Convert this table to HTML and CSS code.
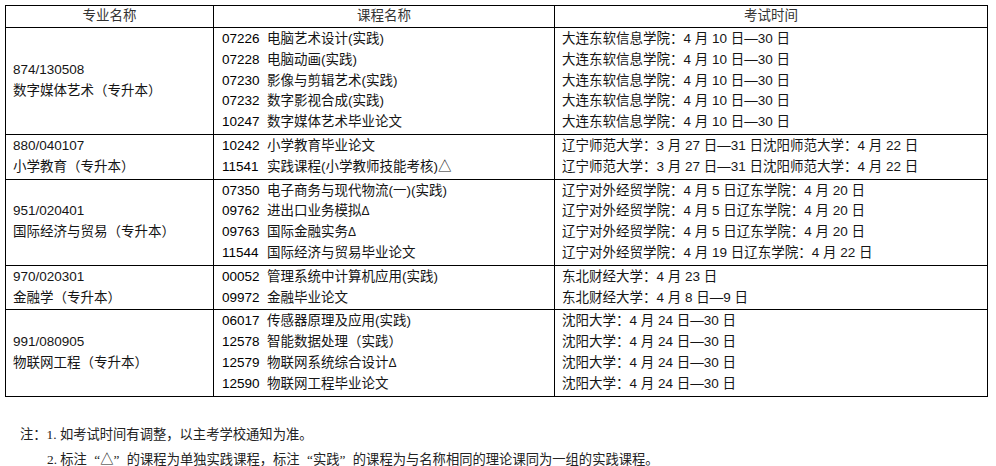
FILE: index.html
```html
<!DOCTYPE html>
<html lang="zh-CN">
<head>
<meta charset="utf-8">
<link rel="stylesheet" href="styles.css">
</head>
<body>
<div class="page">
<table class="sched">
<colgroup><col class="c1"><col class="c2"><col class="c3"></colgroup>
<thead>
<tr><th>专业名称</th><th>课程名称</th><th>考试时间</th></tr>
</thead>
<tbody>
<tr>
<td class="major"><div>874/130508</div><div>数字媒体艺术（专升本）</div></td>
<td class="course">
<div><span class="code">07226</span>电脑艺术设计(实践)</div>
<div><span class="code">07228</span>电脑动画(实践)</div>
<div><span class="code">07230</span>影像与剪辑艺术(实践)</div>
<div><span class="code">07232</span>数字影视合成(实践)</div>
<div><span class="code">10247</span>数字媒体艺术毕业论文</div>
</td>
<td class="time">
<div>大连东软信息学院：4 月 10 日—30 日</div>
<div>大连东软信息学院：4 月 10 日—30 日</div>
<div>大连东软信息学院：4 月 10 日—30 日</div>
<div>大连东软信息学院：4 月 10 日—30 日</div>
<div>大连东软信息学院：4 月 10 日—30 日</div>
</td>
</tr>
<tr>
<td class="major"><div>880/040107</div><div>小学教育（专升本）</div></td>
<td class="course">
<div><span class="code">10242</span>小学教育毕业论文</div>
<div><span class="code">11541</span>实践课程(小学教师技能考核)△</div>
</td>
<td class="time">
<div>辽宁师范大学：3 月 27 日—31 日沈阳师范大学：4 月 22 日</div>
<div>辽宁师范大学：3 月 27 日—31 日沈阳师范大学：4 月 22 日</div>
</td>
</tr>
<tr>
<td class="major"><div>951/020401</div><div>国际经济与贸易（专升本）</div></td>
<td class="course">
<div><span class="code">07350</span>电子商务与现代物流(一)(实践)</div>
<div><span class="code">09762</span>进出口业务模拟<span class="delta">Δ</span></div>
<div><span class="code">09763</span>国际金融实务<span class="delta">Δ</span></div>
<div><span class="code">11544</span>国际经济与贸易毕业论文</div>
</td>
<td class="time">
<div>辽宁对外经贸学院：4 月 5 日辽东学院：4 月 20 日</div>
<div>辽宁对外经贸学院：4 月 5 日辽东学院：4 月 20 日</div>
<div>辽宁对外经贸学院：4 月 5 日辽东学院：4 月 20 日</div>
<div>辽宁对外经贸学院：4 月 19 日辽东学院：4 月 22 日</div>
</td>
</tr>
<tr>
<td class="major"><div>970/020301</div><div>金融学（专升本）</div></td>
<td class="course">
<div><span class="code">00052</span>管理系统中计算机应用(实践)</div>
<div><span class="code">09972</span>金融毕业论文</div>
</td>
<td class="time">
<div>东北财经大学：4 月 23 日</div>
<div>东北财经大学：4 月 8 日—9 日</div>
</td>
</tr>
<tr>
<td class="major"><div>991/080905</div><div>物联网工程（专升本）</div></td>
<td class="course">
<div><span class="code">06017</span>传感器原理及应用(实践)</div>
<div><span class="code">12578</span>智能数据处理（实践）</div>
<div><span class="code">12579</span>物联网系统综合设计<span class="delta">Δ</span></div>
<div><span class="code">12590</span>物联网工程毕业论文</div>
</td>
<td class="time">
<div>沈阳大学：4 月 24 日—30 日</div>
<div>沈阳大学：4 月 24 日—30 日</div>
<div>沈阳大学：4 月 24 日—30 日</div>
<div>沈阳大学：4 月 24 日—30 日</div>
</td>
</tr>
</tbody>
</table>
<div class="notes">
<p class="note first">注：1. 如考试时间有调整，以主考学校通知为准。</p>
<p class="note second">2. 标注<span class="qo">“</span><span class="cjk">△</span><span class="qc">”</span>的课程为单独实践课程，标注<span class="qo">“</span>实践<span class="qc">”</span>的课程为与名称相同的理论课同为一组的实践课程。</p>
</div>
</div>
</body>
</html>
```
FILE: styles.css
```css
html, body {
  margin: 0;
  padding: 0;
  background: #fff;
}
.page {
  padding: 5px 0 0 5px;
  font-family: "Liberation Sans", "Noto Sans CJK SC", sans-serif;
  font-size: 13.5px;
  color: #151515;
}
.sched {
  border-collapse: collapse;
  table-layout: fixed;
  width: 982px;
}
.c1 { width: 208px; }
.c2 { width: 341px; }
.c3 { width: 433px; }
.sched th,
.sched td {
  border: 1px solid #000;
  padding: 1px 0;
  line-height: 20.8px;
}
.sched th {
  font-weight: normal;
  text-align: center;
  color: #333;
  padding: 0;
  height: 21px;
}
.sched td {
  vertical-align: top;
  white-space: nowrap;
}
.sched td.major {
  vertical-align: middle;
  padding-left: 7px;
}
.sched td.course {
  padding-left: 8px;
}
.sched td.time {
  padding-left: 7px;
}
.code {
  display: inline-block;
  width: 45px;
  color: #000;
}
.delta {
  font-size: 12px;
}
.notes {
  font-family: "Liberation Serif", "Noto Sans CJK SC", serif;
  font-size: 13.3px;
  color: #222;
  display: flex;
  flex-direction: column;
  gap: 9px;
  padding-top: 30px;
}
.note {
  margin: 0;
  line-height: 15px;
  white-space: nowrap;
}
.note.first {
  padding-left: 15px;
}
.note.second {
  padding-left: 42px;
}
.cjk {
  font-family: "Noto Sans CJK SC", sans-serif;
}
.qo,
.qc {
  display: inline-block;
  width: 1em;
}
.qo {
  text-align: right;
}
.qc {
  text-align: left;
}
```
